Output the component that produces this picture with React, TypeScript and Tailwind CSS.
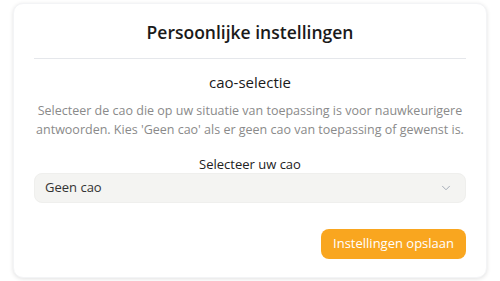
import { ChevronDown } from 'lucide-react'

export default function App() {
  return (
    <div className="w-[500px] h-[281px] bg-white px-[13px] pt-[3px] font-['Open_Sans',sans-serif]">
      <div className="h-[275px] rounded-[10px] bg-white border border-gray-100 shadow-[0_1px_4px_rgba(0,0,0,0.12)] px-5">
        <h2 className="pt-[16px] pb-[14px] text-center text-[17.5px] font-semibold text-[#1a1a1a] border-b border-gray-200 leading-[24px]">
          Persoonlijke instellingen
        </h2>

        <h3 className="mt-[12px] text-center text-[15px] font-medium text-[#1a1a1a] leading-[22px]">cao-selectie</h3>
        <p className="mt-[8px] text-center text-[12.5px] text-[#8a8a8a] leading-[19px]">
          Selecteer de cao die op uw situatie van toepassing is voor nauwkeurigere antwoorden. Kies 'Geen cao' als er geen cao van toepassing of gewenst is.
        </p>

        <div className="mt-[16px]">
          <label className="block text-center text-[13px] font-medium text-[#222] leading-[18px]">Selecteer uw cao</label>
          <button className="mt-0 w-full h-[30px] flex items-center justify-between rounded-[8px] bg-[#f4f4f2] border border-[#efefed] pl-[10px] pr-[12px] text-[13px] text-[#333]">
            <span>Geen cao</span>
            <ChevronDown className="w-3.5 h-3.5 text-gray-400" strokeWidth={1.5} />
          </button>
        </div>

        <div className="flex justify-end mt-[26px]">
          <button className="h-[30px] px-[12px] rounded-[8px] bg-[#f9a61f] text-white text-[13px] font-medium">
            Instellingen opslaan
          </button>
        </div>
      </div>
    </div>
  )
}
